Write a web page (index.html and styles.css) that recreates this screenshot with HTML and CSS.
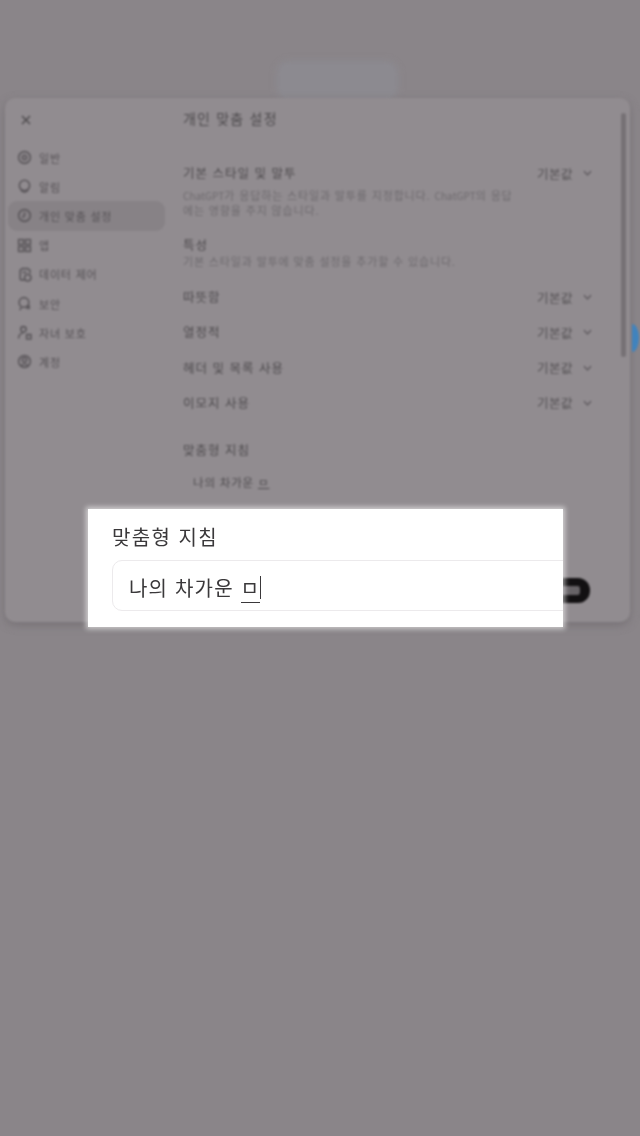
FILE: index.html
```html
<!DOCTYPE html>
<html lang="ko">
<head>
<meta charset="utf-8">
<title>맞춤형 지침</title>
<link rel="stylesheet" href="styles.css">
</head>
<body>
<div class="scene">
  <div class="top-pill"></div>
  <div class="dialog">
    <aside class="side">
      <svg class="close" viewBox="0 0 12 12"><path d="M2 2l8 8M10 2l-8 8"/></svg>
      <nav class="nav">
        <div class="nav-item"><svg viewBox="0 0 14 14"><circle cx="7" cy="7" r="5.5"/><circle cx="7" cy="7" r="2"/></svg><span>일반</span></div>
        <div class="nav-item"><svg viewBox="0 0 14 14"><circle cx="7" cy="6" r="4.800"/><path d="M3.500 10.500c1 1 2 1.800 3.500 1.800s2.500-.8 3.500-1.800"/></svg><span>알림</span></div>
        <div class="nav-item active"><svg viewBox="0 0 14 14"><circle cx="7" cy="7" r="5.500"/><path d="M7 4v3l-2 2"/></svg><span>개인 맞춤 설정</span></div>
        <div class="nav-item"><svg viewBox="0 0 14 14"><rect x="1.500" y="1.500" width="4.500" height="4.500"/><rect x="8" y="1.500" width="4.500" height="4.500"/><rect x="1.500" y="8" width="4.500" height="4.500"/><rect x="8" y="8" width="4.500" height="4.500"/></svg><span>앱</span></div>
        <div class="nav-item"><svg viewBox="0 0 14 14"><path d="M3 12V3l2-1.500h5L12 3v3M3 12h4"/><circle cx="10" cy="10" r="3"/><path d="M5 5h4"/></svg><span>데이터 제어</span></div>
        <div class="nav-item"><svg viewBox="0 0 14 14"><circle cx="6.500" cy="6" r="4.500"/><path d="M4 11l-1.500 2M9 9l3 3M9 12l3-3"/></svg><span>보안</span></div>
        <div class="nav-item"><svg viewBox="0 0 14 14"><circle cx="6" cy="4" r="2.500"/><path d="M1.500 12.500c0-3 2-5 4.500-5M9 9h4v4H9z"/></svg><span>자녀 보호</span></div>
        <div class="nav-item"><svg viewBox="0 0 14 14"><circle cx="7" cy="7" r="5.500"/><circle cx="7" cy="5.500" r="2"/><path d="M3.500 11c1-2 6-2 7 0"/></svg><span>계정</span></div>
      </nav>
    </aside>
    <main class="content">
      <h1 class="title">개인 맞춤 설정</h1>
      <section class="base">
        <div class="row-head"><span class="label">기본 스타일 및 말투</span><span class="value">기본값<svg viewBox="0 0 10 6"><path d="M1 1l4 4 4-4"/></svg></span></div>
        <p class="desc"><span class="en">ChatGPT</span>가 응답하는 스타일과 말투를 지정합니다. <span class="en">ChatGPT</span>의 응답<br>에는 영향을 주지 않습니다.</p>
      </section>
      <section class="trait">
        <div class="label">특성</div>
        <p class="desc">기본 스타일과 말투에 맞춤 설정을 추가할 수 있습니다.</p>
      </section>
      <div class="rows">
        <div class="row-head"><span class="label">따뜻함</span><span class="value">기본값<svg viewBox="0 0 10 6"><path d="M1 1l4 4 4-4"/></svg></span></div>
        <div class="row-head"><span class="label">열정적</span><span class="value">기본값<svg viewBox="0 0 10 6"><path d="M1 1l4 4 4-4"/></svg></span></div>
        <div class="row-head"><span class="label">헤더 및 목록 사용</span><span class="value">기본값<svg viewBox="0 0 10 6"><path d="M1 1l4 4 4-4"/></svg></span></div>
        <div class="row-head"><span class="label">이모지 사용</span><span class="value">기본값<svg viewBox="0 0 10 6"><path d="M1 1l4 4 4-4"/></svg></span></div>
      </div>
      <div class="custom-label label">맞춤형 지침</div>
      <div class="custom-input">나의 차가운 <u>ㅁ</u></div>
    </main>
    <div class="scrollbar"></div>
    <div class="dark-btn"></div>
  </div>
  <div class="blue-tab"></div>
</div>
<div class="spot">
  <div class="spot-label">맞춤형 지침</div>
  <div class="spot-input"><span class="spot-text">나의 차가운 <span class="spot-comp">ㅁ</span></span><span class="caret"></span></div>
</div>
</body>
</html>
```
FILE: styles.css
```css
* { box-sizing: border-box; }
html, body { margin: 0; padding: 0; }
body {
  width: 640px;
  height: 1136px;
  overflow: hidden;
  position: relative;
  background: #8a8589;
  font-family: "Noto Sans CJK KR", "Noto Sans", sans-serif;
}
.scene {
  position: relative;
  height: 1136px;
  padding: 98px 10px 0 5px;
  filter: blur(1.200px);
}
.top-pill {
  position: absolute;
  left: 280px;
  top: 64px;
  width: 115px;
  height: 34px;
  border-radius: 8px;
  background: #8c8a90;
  box-shadow: 0 0 6px 3px #8c8a90;
}
.dialog {
  position: relative;
  display: flex;
  width: 625px;
  height: 524px;
  border-radius: 10px;
  background: #918c90;
  box-shadow: 0 3px 8px #767175;
}
.side {
  width: 178px;
  flex: none;
  padding: 16px 0 0 3px;
}
.close {
  display: block;
  width: 12px;
  height: 12px;
  margin-left: 12px;
  fill: none;
  stroke: #4a474a;
  stroke-width: 1.4;
}
.nav {
  display: flex;
  flex-direction: column;
  margin-top: 17px;
}
.nav-item {
  display: flex;
  align-items: center;
  gap: 7px;
  height: 29.200px;
  width: 157px;
  padding-left: 9px;
  border-radius: 9px;
  font-size: 11px;
  letter-spacing: 0.8px;
  color: #565256;
}
.nav-item svg {
  width: 15px;
  height: 15px;
  flex: none;
  fill: none;
  stroke: #5a565a;
  stroke-width: 1.500;
}
.active { background: #878286; }
.content {
  flex: 1;
  padding: 10px 0 0 0;
  min-width: 0;
}
.title {
  margin: 0;
  font-size: 14px;
  line-height: 20px;
  font-weight: 400;
  letter-spacing: 1.200px;
  color: #4d4a4d;
}
.row-head {
  display: flex;
  justify-content: space-between;
  align-items: center;
  height: 20px;
  padding-right: 38px;
}
.label {
  font-size: 12.500px;
  line-height: 20px;
  letter-spacing: 1px;
  color: #4d4a4d;
}
.value {
  display: flex;
  align-items: center;
  gap: 10px;
  font-size: 12.500px;
  letter-spacing: 0.5px;
  color: #524f52;
}
.value svg {
  width: 9px;
  height: 6px;
  fill: none;
  stroke: #565256;
  stroke-width: 1.300;
}
.base { margin-top: 35px; }
.desc {
  margin: 0;
  width: 350px;
  font-size: 11px;
  line-height: 15px;
  letter-spacing: 0.85px;
  color: #6e6a6e;
}
.en { font-size: 10px; letter-spacing: 0.1px; }
.base .desc { margin-top: 5px; }
.trait { margin-top: 18px; }
.trait .label { line-height: 18px; }
.trait .desc { line-height: 15px; }
.rows {
  display: flex;
  flex-direction: column;
  gap: 15.330px;
  margin-top: 18px;
}
.custom-label { margin-top: 27px; }
.custom-input {
  margin: 12px 0 0 10px;
  font-size: 11.500px;
  line-height: 20px;
  letter-spacing: 0.8px;
  color: #4d4a4d;
}
.custom-input u { text-decoration: underline; }
.scrollbar {
  position: absolute;
  left: 616px;
  top: 15px;
  width: 5px;
  height: 244px;
  border-radius: 3px;
  background: #767175;
}
.dark-btn {
  position: absolute;
  left: 545px;
  top: 480px;
  width: 40px;
  height: 25px;
  border-radius: 0 12px 12px 0;
  background: #676367;
  border: 8px solid #121012;
  border-right-width: 10px;
}
.blue-tab {
  position: absolute;
  left: 625px;
  top: 324px;
  width: 14px;
  height: 28px;
  border-radius: 50%;
  background: #4083bd;
  clip-path: inset(0 0 0 7px);
}
.spot {
  position: absolute;
  left: 88px;
  top: 509px;
  width: 475px;
  height: 118px;
  background: #fff;
  box-shadow: 0 0 5px 2px rgba(255, 255, 255, 0.6);
  padding: 13px 0 0 24px;
  overflow: hidden;
  filter: blur(0.7px);
}
.spot-label {
  font-size: 20px;
  line-height: 30px;
  letter-spacing: 1.400px;
  color: #3a383a;
}
.spot-input {
  display: flex;
  align-items: center;
  height: 51px;
  margin: 8px -12px 0 0;
  padding: 3px 0 0 16px;
  border: 1px solid #eceaec;
  border-radius: 10px;
  font-size: 20px;
  letter-spacing: 1.200px;
  color: #3a383a;
}
.spot-text { white-space: pre; }
.spot-comp { border-bottom: 1.500px solid #3a383a; }
.caret {
  width: 1px;
  height: 23px;
  background: #3a383a;
}
```
